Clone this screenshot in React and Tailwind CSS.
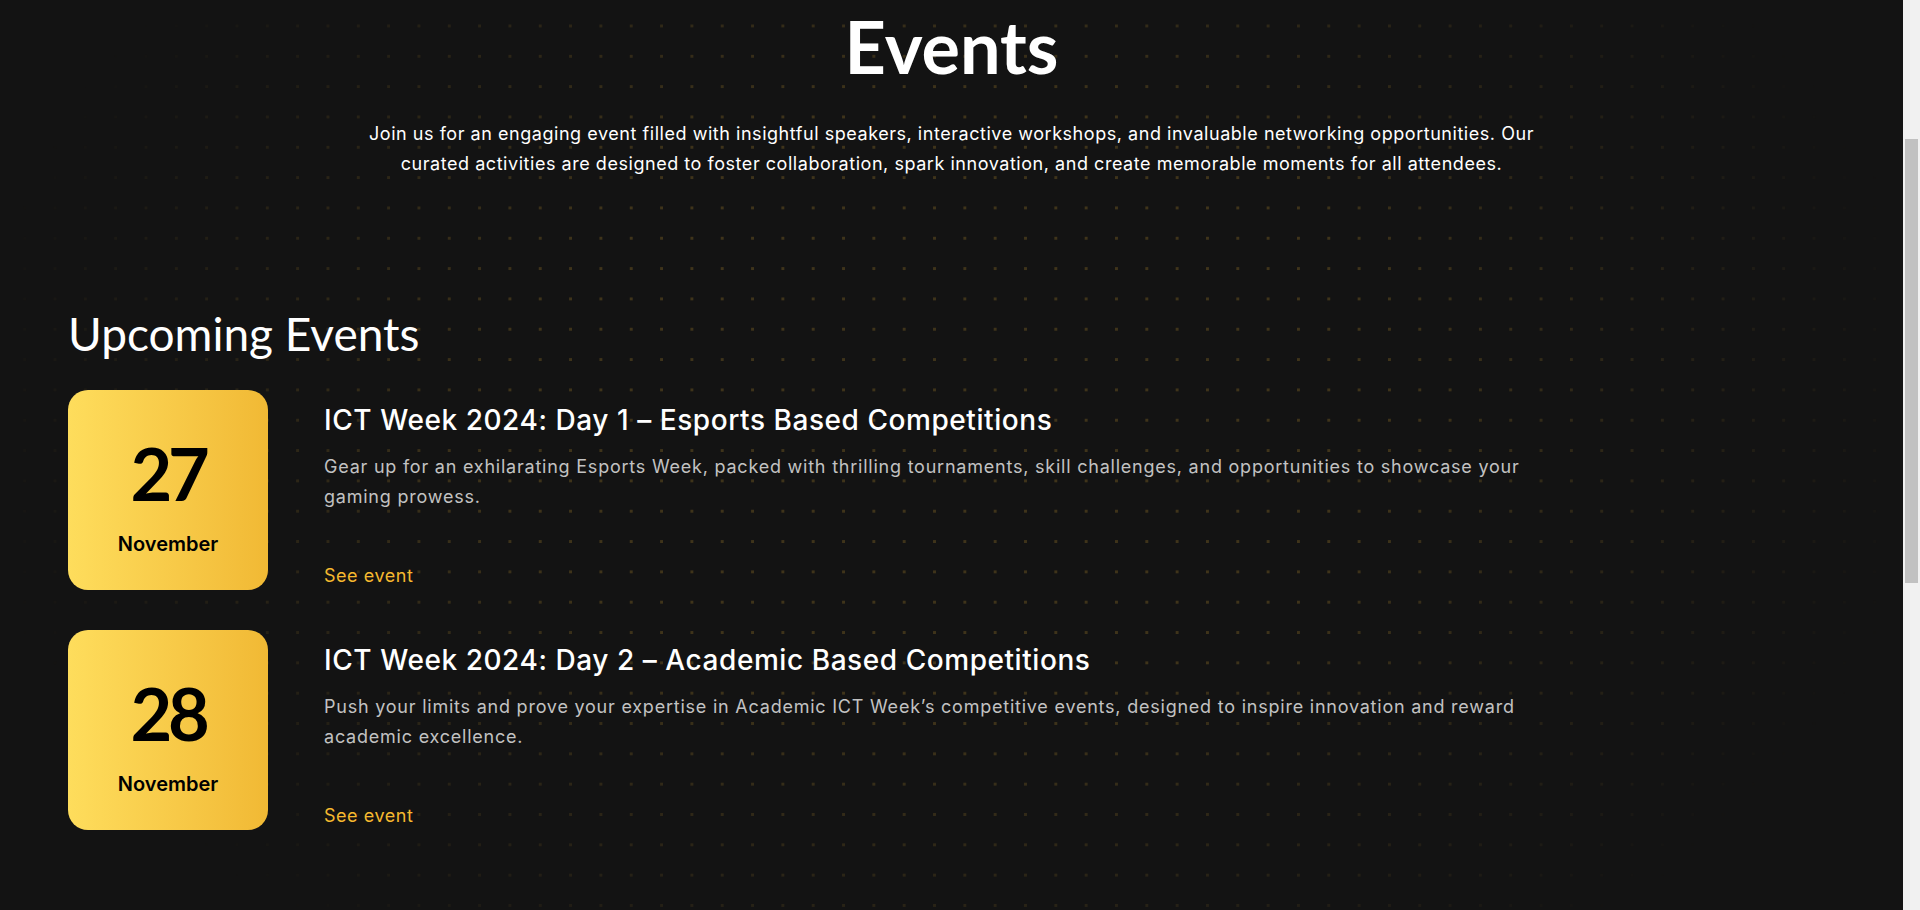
const events = [
  {
    day: '27',
    month: 'November',
    title: 'ICT Week 2024: Day 1 – Esports Based Competitions',
    text: 'Gear up for an exhilarating Esports Week, packed with thrilling tournaments, skill challenges, and opportunities to showcase your gaming prowess.',
  },
  {
    day: '28',
    month: 'November',
    title: 'ICT Week 2024: Day 2 – Academic Based Competitions',
    text: 'Push your limits and prove your expertise in Academic ICT Week’s competitive events, designed to inspire innovation and reward academic excellence.',
  },
]

export default function App() {
  return (
    <div className="flex h-[910px] w-full overflow-hidden bg-[#131313] font-['Inter','Liberation_Sans',sans-serif]">
      <main className="relative flex-1">
        {/* dot grid */}
        <div className="pointer-events-none absolute inset-0 bg-[radial-gradient(circle,rgba(255,196,60,0.19)_1.4px,transparent_1.9px)] bg-[size:30.33px_30.33px] bg-[position:9.5px_10.8px] [mask-image:radial-gradient(ellipse_52%_75%_at_50%_45%,black_45%,transparent_100%)]" />

        <div className="relative">
          <header className="flex flex-col items-center pt-[10px]">
            <h1 className="font-['Lato','Liberation_Sans',sans-serif] text-[72px] font-bold leading-none text-white">
              Events
            </h1>
            <p className="mt-[37px] max-w-[1180px] text-center text-[18px] leading-[30px] tracking-[0.03em] text-white">
              Join us for an engaging event filled with insightful speakers, interactive workshops, and invaluable
              networking opportunities. Our curated activities are designed to foster collaboration, spark innovation,
              and create memorable moments for all attendees.
            </p>
          </header>

          <section className="mt-[127px] pl-[68px]">
            <h2 className="font-['Lato','Liberation_Sans',sans-serif] text-[46px] font-normal leading-[1.2] text-white">
              Upcoming Events
            </h2>
            <div className="mt-[29px] flex flex-col gap-10">
              {events.map((e) => (
                <EventRow key={e.day} event={e} />
              ))}
            </div>
          </section>
        </div>
      </main>

      {/* browser scrollbar */}
      <div className="w-[17px] shrink-0 bg-[#f1f1f1] pt-[139px]">
        <div className="ml-[2px] h-[444px] w-[13px] bg-[#c1c1c1]" />
      </div>
    </div>
  )
}

function EventRow({ event }) {
  return (
    <div className="flex gap-[56px]">
      <div className="flex h-[200px] w-[200px] shrink-0 flex-col items-center rounded-[20px] bg-gradient-to-r from-[#fedd5c] to-[#f1b934] pt-[47px] text-black">
        <span className="font-['Lato','Liberation_Sans',sans-serif] text-[72px] font-bold leading-none tracking-[-0.06em]">
          {event.day}
        </span>
        <span className="mt-[23px] text-[20px] font-semibold leading-[1.2]">{event.month}</span>
      </div>
      <div className="flex h-[200px] max-w-[1235px] flex-col justify-between pb-[1px] pt-[12px]">
        <div>
          <h3 className="text-[28px] font-medium leading-[1.3] tracking-[0.02em] text-white">{event.title}</h3>
          <p className="mt-[13px] text-[18px] leading-[30px] tracking-[0.043em] text-[#c2c2c2]">{event.text}</p>
        </div>
        <a href="#" className="self-start text-[18px] leading-[1.5] tracking-[0.03em] text-[#f6b92f]">
          See event
        </a>
      </div>
    </div>
  )
}
